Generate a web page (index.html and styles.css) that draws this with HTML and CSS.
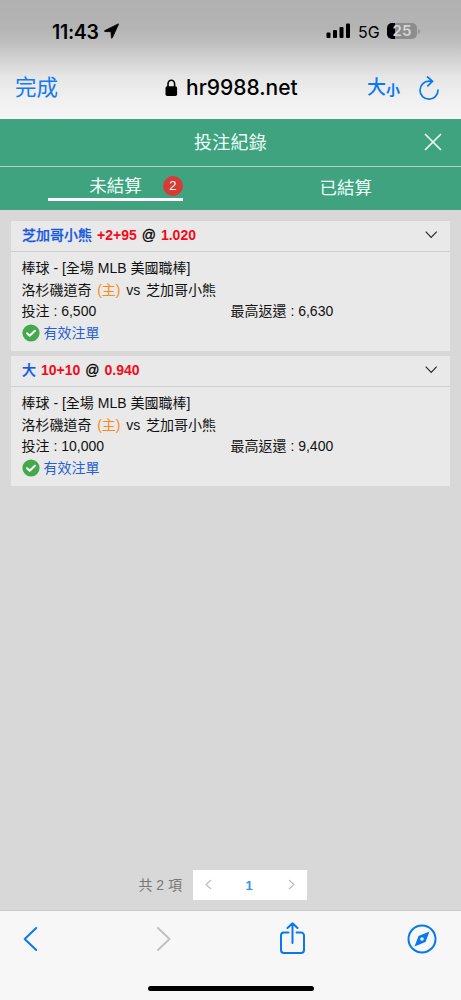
FILE: index.html
```
<!DOCTYPE html>
<html lang="zh-Hant">
<head>
<meta charset="utf-8">
<meta name="viewport" content="width=device-width, initial-scale=1">
<title>投注紀錄</title>
<link rel="stylesheet" href="styles.css">
</head>
<body>
<div class="phone">
  <header class="browser-top">
    <div class="status">
      <div class="clock"><span class="time">11:43</span><svg width="15" height="16" viewBox="0 0 15 16"><path stroke="#000" stroke-width=".8" stroke-linejoin="round" d="M14.200.9.8 7.600c-.6.4-.4.900.2.900l6 .2.400 6c.1.7.7.7.900.1L14.500 1.300c.1-.3 0-.5-.3-.4Z"/></svg></div>
      <div class="signals">
        <svg width="25" height="16" viewBox="0 0 25 16"><rect x="0.500" y="9.500" width="4" height="5.500" rx="1"/><rect x="7" y="7" width="4" height="8" rx="1"/><rect x="13.500" y="4" width="4" height="11" rx="1"/><rect x="20" y="0.500" width="4" height="14.500" rx="1"/></svg>
        <span class="network">5G</span>
        <span class="battery">25</span><i class="battery-tip"></i>
      </div>
    </div>
    <div class="address">
      <span class="done">完成</span>
      <div class="site"><svg width="13" height="18" viewBox="0 0 13 18"><rect x="0.500" y="7.200" width="11.600" height="9.800" rx="1.700"/><path d="M3 8V4.900a3.300 3.700 0 0 1 6.600 0V8" fill="none" stroke="#000" stroke-width="1.600"/></svg><span>hr9988.net</span></div>
      <div class="tools"><span class="size-big">大</span><span class="size-small">小</span>
        <svg class="reload" width="22" height="25" viewBox="0 0 22 25"><path d="M14 5.200H11A9 9 0 1 0 20 14.200M9.500 1l5 4.200-4.700 4.600"/></svg>
      </div>
    </div>
  </header>
  <main class="records">
    <div class="title-bar"><h1>投注紀錄</h1><svg class="close" width="18" height="18" viewBox="0 0 18 18"><path d="m1 1 16 16M17 1 1 17"/></svg></div>
    <nav class="tabs">
      <div class="tab"><div class="tab-active"><span>未結算</span><b class="count">2</b></div></div>
      <div class="tab tab-settled"><span>已結算</span></div>
    </nav>
    <section class="bets">
      <article class="bet">
        <div class="bet-head"><div class="pick"><span class="team">芝加哥小熊</span> <span class="odds">+2+95</span> <span class="at">@</span> <span class="odds">1.020</span></div><svg class="expand" width="13" height="8" viewBox="0 0 13 8"><path d="m.7.7 5.500 5.600L11.700.7"/></svg></div>
        <div class="bet-body">
          <div>棒球 - [全場 MLB 美國職棒]</div>
          <div class="match"><span>洛杉磯道奇</span><span class="home">(主)</span><span>vs</span><span>芝加哥小熊</span></div>
          <div class="amounts"><span>投注 : 6,500</span><span>最高返還 : 6,630</span></div>
          <div class="valid"><svg width="18" height="18" viewBox="0 0 18 18"><circle cx="9" cy="9" r="8.600"/><path d="m5 9.200 2.700 2.600 5.200-5.100"/></svg><span>有效注單</span></div>
        </div>
      </article>
      <article class="bet">
        <div class="bet-head"><div class="pick"><span class="team">大</span> <span class="odds">10+10</span> <span class="at">@</span> <span class="odds">0.940</span></div><svg class="expand" width="13" height="8" viewBox="0 0 13 8"><path d="m.7.7 5.500 5.600L11.700.7"/></svg></div>
        <div class="bet-body">
          <div>棒球 - [全場 MLB 美國職棒]</div>
          <div class="match"><span>洛杉磯道奇</span><span class="home">(主)</span><span>vs</span><span>芝加哥小熊</span></div>
          <div class="amounts"><span>投注 : 10,000</span><span>最高返還 : 9,400</span></div>
          <div class="valid"><svg width="18" height="18" viewBox="0 0 18 18"><circle cx="9" cy="9" r="8.600"/><path d="m5 9.200 2.700 2.600 5.200-5.100"/></svg><span>有效注單</span></div>
        </div>
      </article>
    </section>
    <div class="pagination"><span class="total">共 2 項</span><div class="pages"><svg width="7" height="11" viewBox="0 0 7 11"><path d="M6 1 1 5.500 6 10"/></svg><b>1</b><svg width="7" height="11" viewBox="0 0 7 11"><path d="m1 1 5 4.500L1 10"/></svg></div></div>
  </main>
  <footer class="browser-bottom">
    <div class="controls">
      <svg class="blue" width="16" height="26" viewBox="0 0 16 26"><path d="M14.200 2 2.700 13l11.500 11"/></svg>
      <svg class="gray forward" width="16" height="26" viewBox="0 0 16 26"><path d="m2 2 11.500 11L2 24"/></svg>
      <svg class="blue share" width="27" height="34" viewBox="0 0 27 34"><path d="M9.500 10.500H5a3 3 0 0 0-3 3V28a3 3 0 0 0 3 3h17a3 3 0 0 0 3-3V13.500a3 3 0 0 0-3-3h-4.500M13.500 21V1.500M8.500 6l5-4.700 5 4.700"/></svg>
      <svg class="blue compass" width="30" height="30" viewBox="0 0 30 30"><circle cx="15" cy="15" r="13.500"/><path class="needle" fill-rule="evenodd" d="M22.500 7.500 11.500 12 7.500 22.500l11-4.500ZM15 13.200a1.800 1.800 0 1 1 0 3.600 1.800 1.800 0 0 1 0-3.600Z"/></svg>
    </div>
    <div class="home-indicator"></div>
  </footer>
</div>
</body>
</html>
```
FILE: styles.css
```
* { box-sizing: border-box; }
body { margin: 0; font-family: "Liberation Sans", "Noto Sans CJK TC", sans-serif; color: #111; }
svg { display: block; flex: none; }
.phone { width: 461px; height: 1000px; display: flex; flex-direction: column; overflow: hidden; }

.browser-top { height: 119px; flex: none; background: linear-gradient(#b1b1b1 0, #b4b4b4 28px, #bfbfbf 43px, #d3d3d3 60px, #e6e6e6 77px, #f0f0f0 98px, #f5f5f5 119px); font-family: Inter, "Noto Sans CJK TC", sans-serif; color: #000; }
.status { height: 62px; display: flex; justify-content: space-between; padding: 0 41px 0 52px; align-items: center; }
.clock { display: flex; align-items: center; gap: 5px; }
.time { font-size: 19.500px; font-weight: 600; letter-spacing: -.3px; line-height: 24px; padding-top: 1px; }
.signals { display: flex; align-items: center; }
.network { font-size: 16px; margin-left: 7px; width: 29px; line-height: 20px; padding-top: 1px; }
.battery { width: 30px; height: 16px; border-radius: 5px; background: linear-gradient(90deg, #000 0 8px, #8d8d8d 8px); color: #d5d5d5; font-size: 15px; line-height: 16px; font-weight: 600; text-align: center; }
.battery-tip { width: 2px; height: 5px; margin-left: 1px; border-radius: 0 2px 2px 0; background: #999; }
.address { height: 52px; display: flex; align-items: center; padding: 0 21px 0 15px; }
.done { width: 150px; font-size: 21.500px; color: #1479f3; line-height: 30px; padding-bottom: 2px; }
.site { display: flex; align-items: center; gap: 8px; font-size: 21px; font-weight: 500; line-height: 28px; }
.tools { flex: 1; display: flex; align-items: center; justify-content: flex-end; color: #0b78f3; font-weight: 500; }
.size-big { font-size: 19px; line-height: 28px; }
.size-small { font-size: 14px; line-height: 28px; padding-top: 3px; font-weight: 700; }
.reload { margin-left: 18px; fill: none; stroke: #0b78f3; stroke-width: 1.700; stroke-linecap: round; }

.records { flex: 1; display: flex; flex-direction: column; background: #d8d8d8; min-height: 0; }
.title-bar { height: 48px; display: flex; align-items: center; justify-content: flex-end; padding: 0 19px 1px 0; background: #3fa380; border-bottom: 1px solid #b7cfc5; color: #edfff7; }
.title-bar h1 { flex: 1; padding: 1px 0 0 37px; margin: 0; text-align: center; font-size: 18px; font-weight: 400; letter-spacing: .3px; line-height: 26px; }
.close { fill: none; stroke: #f0fff9; stroke-width: 1.700; }
.tabs { height: 43px; display: flex; background: #3fa380; color: #edfff7; font-size: 17.500px; }
.tab { flex: 1; display: flex; justify-content: center; align-items: flex-start; }
.tab-active { width: 135px; height: 34px; border-bottom: 3px solid #fff; display: flex; align-items: center; justify-content: flex-end; gap: 21px; line-height: 26px; padding-top: 6px; }
.count { width: 20px; height: 20px; border-radius: 50%; background: #d83a36; font-size: 13px; line-height: 20px; font-weight: 400; text-align: center; }
.tab-settled { align-items: center; line-height: 26px; padding-bottom: 1px; }

.bets { padding: 11px 11px 0; display: flex; flex-direction: column; gap: 5px; }
.bet { height: 130px; background: #e9e9e9; }
.bet-head { height: 31px; border-bottom: 1px solid #cecece; display: flex; align-items: center; justify-content: space-between; padding: 0 12px 0 11px; font-size: 14px; line-height: 20px; }
.pick { display: flex; gap: 5px; padding-bottom: 2px; }
.team { color: #1557e0; font-weight: 500; -webkit-text-stroke: .25px #1557e0; }
.odds { color: #f20a19; font-weight: 700; }
.at { color: #000; -webkit-text-stroke: .3px #000; }
.expand { fill: none; stroke: #292929; stroke-width: 1.200; margin-bottom: 3px; }
.bet-body { padding: 6px 11px 0 10.500px; font-size: 14px; line-height: 21.500px; }
.match { display: flex; gap: 5.700px; }
.home { color: #f88b19; }
.amounts { display: grid; grid-template-columns: 209px 1fr; }
.valid { display: flex; align-items: center; gap: 4px; color: #285fd4; line-height: 21px; }
.valid svg { fill: #43a94b; }
.valid path { fill: none; stroke: #fff; stroke-width: 2; stroke-linecap: round; stroke-linejoin: round; }

.pagination { display: flex; align-items: center; margin: auto 154px 10px 0; justify-content: flex-end; gap: 11px; color: #777; font-size: 14px; }
.total { padding-bottom: 3px; }
.pages { width: 114px; height: 30px; background: #fff; display: flex; align-items: center; justify-content: space-between; padding: 0 12px 1px; color: #3d95dc; font-size: 13px; }
.pages b { padding-top: 1px; margin-left: -2px; }
.pages svg { fill: none; stroke: #bbb; stroke-width: 1.100; }

.browser-bottom { height: 90px; flex: none; background: #f7f7f7; border-top: 1px solid #cbcbcb; display: flex; flex-direction: column; align-items: center; }
.controls { width: 100%; height: 55px; display: flex; align-items: center; padding: 0 24px 0 22px; }
.controls svg { fill: none; stroke-width: 2; stroke-linecap: round; stroke-linejoin: round; }
.controls .blue { stroke: #0878ec; }
.controls .gray { stroke: #c1c1c1; }
.forward { margin-left: 118px; }
.share { margin-left: 107px; }
.compass { margin-left: auto; }
.compass .needle { fill: #0878ec; stroke: none; }
.home-indicator { width: 166px; height: 5px; border-radius: 3px; background: #000; margin-top: 20px; }
```
